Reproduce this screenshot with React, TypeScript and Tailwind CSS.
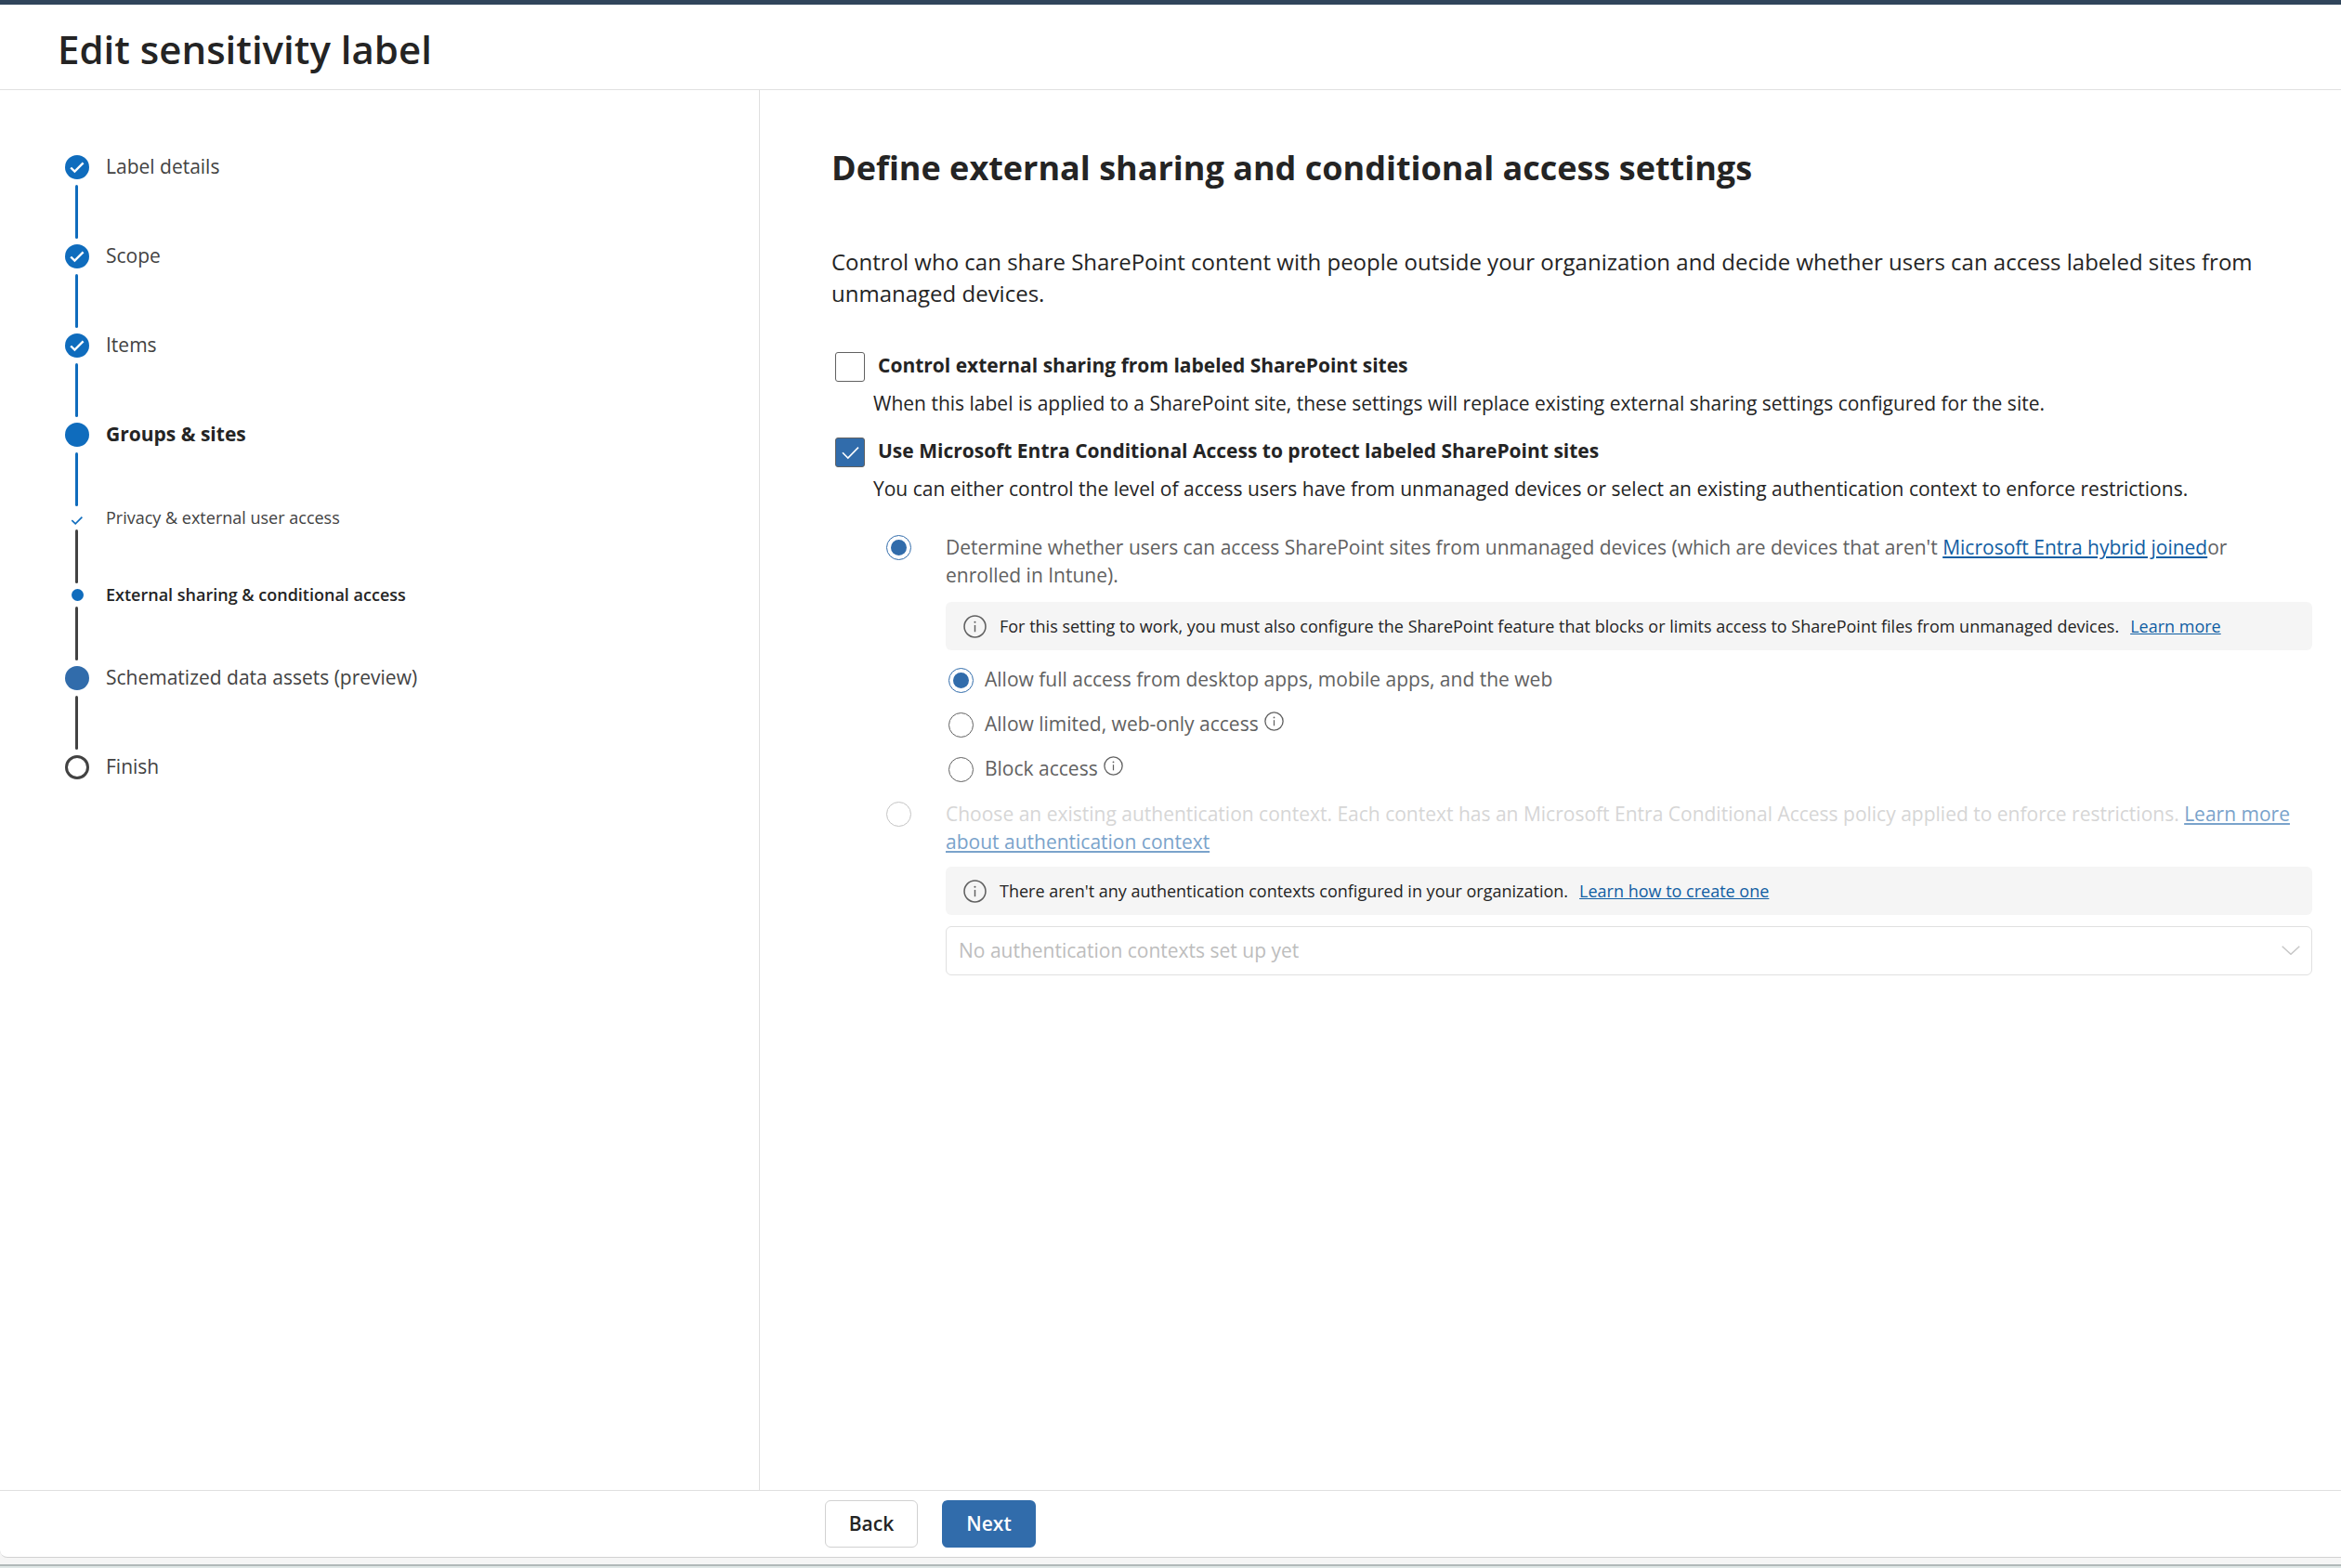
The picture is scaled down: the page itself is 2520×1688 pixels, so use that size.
import { ReactNode } from "react";

type StepKind = "done" | "current" | "subDone" | "subCurrent" | "visited" | "todo";

const steps: { label: string; kind: StepKind; line?: "blue" | "dark" }[] = [
  { label: "Label details", kind: "done", line: "blue" },
  { label: "Scope", kind: "done", line: "blue" },
  { label: "Items", kind: "done", line: "blue" },
  { label: "Groups & sites", kind: "current", line: "blue" },
  { label: "Privacy & external user access", kind: "subDone", line: "dark" },
  { label: "External sharing & conditional access", kind: "subCurrent", line: "dark" },
  { label: "Schematized data assets (preview)", kind: "visited", line: "dark" },
  { label: "Finish", kind: "todo" },
];

function StepMarker({ kind }: { kind: StepKind }) {
  if (kind === "done")
    return (
      <svg viewBox="0 0 26 26" className="size-[26px]" aria-hidden="true">
        <circle cx="13" cy="13" r="13" fill="#0f6cbd" />
        <path d="M6.2 13.5l4.2 4.1 9.2-9.2" fill="none" stroke="#fff" strokeWidth="2.4" />
      </svg>
    );
  if (kind === "current") return <span className="size-[26px] rounded-full bg-[#0f6cbd]" />;
  if (kind === "visited") return <span className="size-[26px] rounded-full bg-[#316cab]" />;
  if (kind === "todo") return <span className="size-[26px] rounded-full border-3 border-[#424242]" />;
  if (kind === "subCurrent") return <span className="size-[13px] rounded-full bg-[#0f6cbd]" />;
  return (
    <svg viewBox="0 0 13 13" className="size-[13px] overflow-visible" aria-hidden="true">
      <path d="M0.3 9.1l3.9 3.8 7.2-7.3" fill="none" stroke="#0f6cbd" strokeWidth="1.6" />
    </svg>
  );
}

function Step({ label, kind, line }: { label: string; kind: StepKind; line?: "blue" | "dark" }) {
  const sub = kind === "subDone" || kind === "subCurrent";
  const bold = kind === "current" || kind === "subCurrent";
  return (
    <li className="flex flex-col gap-1.5">
      <a
        href="#"
        aria-current={kind === "subCurrent" ? "step" : undefined}
        className={`flex items-center gap-[18px] whitespace-nowrap ${sub ? "h-[13px] text-[18px]" : "h-[26px] text-[21px]"} ${
          kind === "current" ? "font-bold text-[#242424]" : bold ? "font-semibold text-[#242424]" : "text-[#424242]"
        }`}
      >
        <span className="flex w-[26px] shrink-0 justify-center">
          <StepMarker kind={kind} />
        </span>
        <span>{label}</span>
      </a>
      {line && (
        <span
          className={`mb-1.5 ml-[11px] h-[58px] w-[3px] rounded-full ${line === "blue" ? "bg-[#0f6cbd]" : "bg-[#424242]"}`}
        />
      )}
    </li>
  );
}

function InfoIcon({ className }: { className: string }) {
  return (
    <svg viewBox="0 0 24 24" className={className} fill="none" stroke="currentColor" aria-hidden="true">
      <circle cx="12" cy="12" r="11" strokeWidth="1.5" />
      <path d="M12 10.5v7" strokeWidth="1.4" />
      <circle cx="12" cy="7.4" r="1" fill="currentColor" stroke="none" />
    </svg>
  );
}

function Link({ children, className = "text-[#115ea3]" }: { children: ReactNode; className?: string }) {
  return (
    <a href="#" className={`underline ${className}`}>
      {children}
    </a>
  );
}

function CheckOption({ id, label, checked, children }: { id: string; label: string; checked?: boolean; children: ReactNode }) {
  return (
    <div className="text-[21px] text-[#242424]">
      <div className="flex h-8 gap-3.5 pl-1">
        <span className="relative size-8 shrink-0">
          <input
            id={id}
            type="checkbox"
            defaultChecked={checked}
            className="block size-8 appearance-none rounded-[3px] border border-[#616161] bg-white checked:bg-[#316cab]"
          />
          {checked && (
            <svg viewBox="0 0 32 32" className="pointer-events-none absolute inset-0 size-8" aria-hidden="true">
              <path d="M8 16.2l5.8 5.8L25 10.6" fill="none" stroke="#fff" strokeWidth="1.6" />
            </svg>
          )}
        </span>
        <label htmlFor={id} className="leading-7 font-bold">
          {label}
        </label>
      </div>
      <p className="mt-[7px] pl-[45px] leading-8">{children}</p>
    </div>
  );
}

function Radio({ id, name, checked, disabled }: { id: string; name: string; checked?: boolean; disabled?: boolean }) {
  return (
    <input
      id={id}
      type="radio"
      name={name}
      defaultChecked={checked}
      disabled={disabled}
      className="size-[27px] shrink-0 appearance-none rounded-full border border-[#616161] bg-white bg-clip-content p-1 checked:border-[#316cab] checked:bg-[#316cab] disabled:border-[#c4c4c4]"
    />
  );
}

function MessageBar({ text, link }: { text: string; link: string }) {
  return (
    <div className="flex min-h-[52px] items-center rounded-md bg-[#f5f5f5] pr-4 pl-[19px] text-[18px] text-[#242424]">
      <InfoIcon className="mr-3.5 size-[25px] shrink-0 text-[#616161]" />
      <p>
        {text}
        <span className="ml-3">
          <Link>{link}</Link>
        </span>
      </p>
    </div>
  );
}

function AccessOption({ id, label, checked, info }: { id: string; label: string; checked?: boolean; info?: boolean }) {
  return (
    <div className="flex h-12 items-center pl-[3px] text-[21px] text-[#616161]">
      <Radio id={id} name="access" checked={checked} />
      <label htmlFor={id} className="ml-3">
        {label}
      </label>
      {info && (
        <button type="button" aria-label={`About: ${label}`} className="mb-2 ml-1.5">
          <InfoIcon className="size-[21px]" />
        </button>
      )}
    </div>
  );
}

export default function App() {
  return (
    <div className="flex min-h-screen flex-col bg-[#f5f5f5] font-['Open_Sans','Noto_Sans',sans-serif] text-[#242424]">
      <div className="h-[5px] bg-[#30455b]" />
      <div className="flex grow flex-col rounded-bl-lg border-b border-[#d1d1d1] bg-white">
        <header className="flex h-[92px] items-center border-b border-[#e0e0e0] px-[62px] pt-1">
          <h1 className="text-[42px] font-semibold">Edit sensitivity label</h1>
        </header>

        <div className="flex grow">
          <nav aria-label="Progress" className="w-[818px] shrink-0 border-r border-[#e0e0e0] pt-[70px] pl-[70px]">
            <ol>
              {steps.map((s) => (
                <Step key={s.label} {...s} />
              ))}
            </ol>
          </nav>

          <main className="grow pt-[58px] pr-[31px] pl-[77px]">
            <h2 className="text-[36px] leading-[52px] font-bold">
              Define external sharing and conditional access settings
            </h2>
            <p className="mt-[58px] text-[24px] leading-[34px]">
              Control who can share SharePoint content with people outside your organization and decide whether users can
              access labeled sites from unmanaged devices.
            </p>

            <div className="mt-[46px] flex flex-col gap-[21px]">
              <CheckOption id="external" label="Control external sharing from labeled SharePoint sites">
                When this label is applied to a SharePoint site, these settings will replace existing external sharing
                settings configured for the site.
              </CheckOption>
              <CheckOption id="entra" checked label="Use Microsoft Entra Conditional Access to protect labeled SharePoint sites">
                You can either control the level of access users have from unmanaged devices or select an existing
                authentication context to enforce restrictions.
              </CheckOption>
            </div>

            <div className="mt-8 pl-[59px]">
              <div className="flex items-start gap-[37px]">
                <span className="flex h-[30px] items-center">
                  <Radio id="determine" name="mode" checked />
                </span>
                <div className="grow">
                  <label htmlFor="determine" className="block pr-4 text-[21px] leading-[30px] text-[#616161]">
                    Determine whether users can access SharePoint sites from unmanaged devices (which are devices that
                    aren't <Link>Microsoft Entra hybrid joined</Link>or enrolled in Intune).
                  </label>
                  <div className="mt-3.5">
                    <MessageBar
                      text="For this setting to work, you must also configure the SharePoint feature that blocks or limits access to SharePoint files from unmanaged devices."
                      link="Learn more"
                    />
                  </div>
                  <div className="mt-2 flex flex-col">
                    <AccessOption id="full" checked label="Allow full access from desktop apps, mobile apps, and the web" />
                    <AccessOption id="limited" info label="Allow limited, web-only access" />
                    <AccessOption id="block" info label="Block access" />
                  </div>
                </div>
              </div>

              <div className="mt-[9px] flex items-start gap-[37px]">
                <span className="flex h-[30px] items-center">
                  <Radio id="context" name="mode" disabled />
                </span>
                <div className="grow">
                  <label htmlFor="context" className="block text-[21px] leading-[30px] text-[#d6d6d6]">
                    Choose an existing authentication context. Each context has an Microsoft Entra Conditional Access
                    policy applied to enforce restrictions.{" "}
                    <Link className="text-[#7aa3cb]">Learn more about authentication context</Link>
                  </label>
                  <div className="mt-3">
                    <MessageBar
                      text="There aren't any authentication contexts configured in your organization."
                      link="Learn how to create one"
                    />
                  </div>
                  <div className="relative mt-3">
                    <select
                      disabled
                      aria-label="Authentication context"
                      className="block h-[53px] w-full appearance-none rounded-md border border-[#e0e0e0] bg-white px-[13px] text-[21px] text-[#bdbdbd] opacity-100"
                    >
                      <option>No authentication contexts set up yet</option>
                    </select>
                    <svg
                      viewBox="0 0 20 10"
                      className="pointer-events-none absolute top-[21px] right-[13px] h-[10px] w-5"
                      fill="none"
                      stroke="#c7c7c7"
                      strokeWidth="1.5"
                      aria-hidden="true"
                    >
                      <path d="M0.7 0.7L10 9.3 19.3 0.7" />
                    </svg>
                  </div>
                </div>
              </div>
            </div>
          </main>
        </div>

        <footer className="flex h-[72px] items-center gap-[26px] border-t border-[#e0e0e0] pl-[888px] text-[21px] font-semibold">
          <button type="button" className="h-[51px] w-[100px] rounded-md border border-[#d1d1d1] bg-white">
            Back
          </button>
          <button type="button" className="h-[51px] w-[101px] rounded-md bg-[#316cab] text-white">
            Next
          </button>
        </footer>
      </div>
      <div className="mt-[7px] h-1 border-t-2 border-[#b1b9b9] bg-[#dfe7e6]" />
    </div>
  );
}
